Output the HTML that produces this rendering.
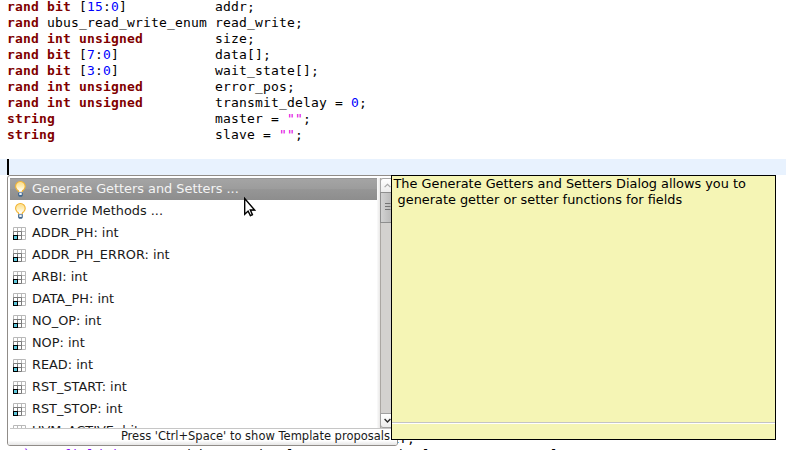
<!DOCTYPE html>
<html><head><meta charset="utf-8">
<style>
html,body{margin:0;padding:0;}
body{width:786px;height:450px;overflow:hidden;background:#fff;position:relative;}
#code2{top:447px !important;}
#code,#code2{position:absolute;left:7px;top:-1px;margin:0;font-family:"DejaVu Sans Mono","Liberation Mono",monospace;font-size:13px;letter-spacing:0.1738px;line-height:16px;color:#000;white-space:pre;}
#code b,#code2 b{color:#7f0000;font-weight:bold;}
#code i,#code2 i{color:#0000ff;font-style:normal;}
#code u{color:#e000e0;text-decoration:none;}
#code s,#code2 s{color:#8a10f8;text-decoration:none;}
#hl{position:absolute;left:0;top:159px;width:786px;height:16px;background:#e8f2fe;}
#caret{position:absolute;left:7px;top:159px;width:2px;height:16px;background:#000;}
#pop{position:absolute;left:7px;top:175px;width:391px;height:271px;border:1px solid #908c88;border-radius:3px;background:#fff;box-sizing:border-box;overflow:hidden;font-family:"DejaVu Sans","Liberation Sans",sans-serif;font-size:12.87px;color:#1a1a1a;}
#list{position:absolute;left:0;top:0;width:389px;height:252px;overflow:hidden;}
.row{position:absolute;left:2px;width:367px;height:22px;line-height:22px;white-space:nowrap;}
.row span{position:absolute;left:22px;top:0px;}
.sel{background:linear-gradient(#969696 0,#969696 1px,#a4a4a4 1px,#9c9c9c 50%,#969696 50%,#8d8d8d 100%);color:#f4f4f4;}
.ic{position:absolute;left:0;top:0;}
#status{position:absolute;left:0;top:252px;width:389px;height:16px;border-top:1px solid #fff;background:linear-gradient(#fff 72%,#e6e6e6);font-size:11.5px;line-height:16px;white-space:nowrap;}
#status span{position:absolute;right:7px;top:-1.5px;}
#sb{position:absolute;left:372px;top:2px;width:15px;height:250px;background:#d3d1cf;border-left:1px solid #aaa6a2;box-sizing:border-box;}
#sbs{position:absolute;left:369px;top:2px;width:3px;height:250px;background:linear-gradient(90deg,#fbfbfb,#e9e8e7);}
#sbu{position:absolute;left:-1px;top:0;width:15px;height:15px;box-sizing:border-box;border:1px solid #a6a6a6;border-radius:3px 0 0 0;background:linear-gradient(#ffffff,#ececec);}
#sbt{position:absolute;left:-1px;top:14px;width:15px;height:31px;box-sizing:border-box;border:1px solid #8e8e8e;background:linear-gradient(90deg,#d2d2d2,#b4b4b4);}
#sbd{position:absolute;left:-1px;top:235px;width:15px;height:15px;box-sizing:border-box;border:1px solid #a0a0a0;border-radius:0 0 0 3px;background:linear-gradient(#ffffff,#ececec);}
#tip{position:absolute;left:391px;top:175px;width:385px;height:265px;box-sizing:border-box;border:1px solid #000;background:#f5f5b5;font-family:"DejaVu Sans","Liberation Sans",sans-serif;font-size:12.87px;line-height:16px;color:#000;white-space:pre;}
#tip .t{position:absolute;left:1.5px;top:-0.5px;}
#tip .sep{position:absolute;left:0;right:0;top:246px;height:1px;background:#c4c4c4;border-bottom:1px solid #fff;}
#mouse{position:absolute;left:240px;top:194px;filter:drop-shadow(0.6px 0.8px 0.6px rgba(0,0,0,0.45));}
</style></head><body>
<svg width="0" height="0" style="position:absolute"><linearGradient id="bg1" x1="0" y1="0" x2="0" y2="1"><stop offset="0" stop-color="#fddc86"/><stop offset="0.45" stop-color="#feedb4"/><stop offset="0.85" stop-color="#ffffff"/></linearGradient></svg>
<div id="hl"></div>
<pre id="code"><b>rand bit</b> [<i>15</i>:<i>0</i>]           addr;
<b>rand</b> ubus_read_write_enum read_write;
<b>rand int unsigned</b>         size;
<b>rand bit</b> [<i>7</i>:<i>0</i>]            data[];
<b>rand bit</b> [<i>3</i>:<i>0</i>]            wait_state[];
<b>rand int unsigned</b>         error_pos;
<b>rand int unsigned</b>         transmit_delay = <i>0</i>;
<b>string</b>                    master = <u>""</u>;
<b>string</b>                    slave = <u>""</u>;


















  <s>`uvm_field_int</s>                           DEFAULT;
</pre>
<pre id="code2">  <s>`uvm_field_int</s>   send have and owl concurrency haul resource normal
</pre>
<div id="caret"></div>
<div id="pop">
<div id="list">
<div class="row sel" style="top:2px"><svg class="ic" width="22" height="22" viewBox="0 0 22 22"><path d="M8.5 14.3V13.2C8.5 12.5 7.7 12.2 7 11.7A4.8 4.8 0 1 1 13.8 11.7C13.1 12.2 12.3 12.5 12.3 13.2V14.3Z" fill="url(#bg1)" stroke="#f1b432" stroke-width="1.15"/><path d="M8.1 14.3h4.7v2.6c0 1-0.9 1.9-1.6 1.9h-1.5c-0.7 0-1.6-0.9-1.6-1.9z" fill="#42688f"/><rect x="9.3" y="14.8" width="2.4" height="2.2" fill="#eef2f6"/><rect x="8.1" y="14" width="4.7" height="0.8" fill="#7d9cbd"/></svg><span>Generate Getters and Setters ...</span></div>
<div class="row" style="top:24px"><svg class="ic" width="22" height="22" viewBox="0 0 22 22"><path d="M8.5 14.3V13.2C8.5 12.5 7.7 12.2 7 11.7A4.8 4.8 0 1 1 13.8 11.7C13.1 12.2 12.3 12.5 12.3 13.2V14.3Z" fill="url(#bg1)" stroke="#f1b432" stroke-width="1.15"/><path d="M8.1 14.3h4.7v2.6c0 1-0.9 1.9-1.6 1.9h-1.5c-0.7 0-1.6-0.9-1.6-1.9z" fill="#42688f"/><rect x="9.3" y="14.8" width="2.4" height="2.2" fill="#eef2f6"/><rect x="8.1" y="14" width="4.7" height="0.8" fill="#7d9cbd"/></svg><span>Override Methods ...</span></div>
<div class="row" style="top:46px"><svg class="ic" width="22" height="22" viewBox="0 0 22 22"><g fill="none" stroke-width="1"><path d="M3.5 5.5h12v12h-12zM7.5 5.5v12M11.5 5.5v12M3.5 9.5h12M3.5 13.5h12" stroke="#b9b9b9"/><path d="M3.5 9.5h8v8h-8zM7.5 9.5v8M3.5 13.5h8" stroke="#7c7c7c"/><rect x="3.5" y="13.5" width="4" height="4" fill="#5cc6da" stroke="#000"/></g></svg><span>ADDR_PH: int</span></div>
<div class="row" style="top:68px"><svg class="ic" width="22" height="22" viewBox="0 0 22 22"><g fill="none" stroke-width="1"><path d="M3.5 5.5h12v12h-12zM7.5 5.5v12M11.5 5.5v12M3.5 9.5h12M3.5 13.5h12" stroke="#b9b9b9"/><path d="M3.5 9.5h8v8h-8zM7.5 9.5v8M3.5 13.5h8" stroke="#7c7c7c"/><rect x="3.5" y="13.5" width="4" height="4" fill="#5cc6da" stroke="#000"/></g></svg><span>ADDR_PH_ERROR: int</span></div>
<div class="row" style="top:90px"><svg class="ic" width="22" height="22" viewBox="0 0 22 22"><g fill="none" stroke-width="1"><path d="M3.5 5.5h12v12h-12zM7.5 5.5v12M11.5 5.5v12M3.5 9.5h12M3.5 13.5h12" stroke="#b9b9b9"/><path d="M3.5 9.5h8v8h-8zM7.5 9.5v8M3.5 13.5h8" stroke="#7c7c7c"/><rect x="3.5" y="13.5" width="4" height="4" fill="#5cc6da" stroke="#000"/></g></svg><span>ARBI: int</span></div>
<div class="row" style="top:112px"><svg class="ic" width="22" height="22" viewBox="0 0 22 22"><g fill="none" stroke-width="1"><path d="M3.5 5.5h12v12h-12zM7.5 5.5v12M11.5 5.5v12M3.5 9.5h12M3.5 13.5h12" stroke="#b9b9b9"/><path d="M3.5 9.5h8v8h-8zM7.5 9.5v8M3.5 13.5h8" stroke="#7c7c7c"/><rect x="3.5" y="13.5" width="4" height="4" fill="#5cc6da" stroke="#000"/></g></svg><span>DATA_PH: int</span></div>
<div class="row" style="top:134px"><svg class="ic" width="22" height="22" viewBox="0 0 22 22"><g fill="none" stroke-width="1"><path d="M3.5 5.5h12v12h-12zM7.5 5.5v12M11.5 5.5v12M3.5 9.5h12M3.5 13.5h12" stroke="#b9b9b9"/><path d="M3.5 9.5h8v8h-8zM7.5 9.5v8M3.5 13.5h8" stroke="#7c7c7c"/><rect x="3.5" y="13.5" width="4" height="4" fill="#5cc6da" stroke="#000"/></g></svg><span>NO_OP: int</span></div>
<div class="row" style="top:156px"><svg class="ic" width="22" height="22" viewBox="0 0 22 22"><g fill="none" stroke-width="1"><path d="M3.5 5.5h12v12h-12zM7.5 5.5v12M11.5 5.5v12M3.5 9.5h12M3.5 13.5h12" stroke="#b9b9b9"/><path d="M3.5 9.5h8v8h-8zM7.5 9.5v8M3.5 13.5h8" stroke="#7c7c7c"/><rect x="3.5" y="13.5" width="4" height="4" fill="#5cc6da" stroke="#000"/></g></svg><span>NOP: int</span></div>
<div class="row" style="top:178px"><svg class="ic" width="22" height="22" viewBox="0 0 22 22"><g fill="none" stroke-width="1"><path d="M3.5 5.5h12v12h-12zM7.5 5.5v12M11.5 5.5v12M3.5 9.5h12M3.5 13.5h12" stroke="#b9b9b9"/><path d="M3.5 9.5h8v8h-8zM7.5 9.5v8M3.5 13.5h8" stroke="#7c7c7c"/><rect x="3.5" y="13.5" width="4" height="4" fill="#5cc6da" stroke="#000"/></g></svg><span>READ: int</span></div>
<div class="row" style="top:200px"><svg class="ic" width="22" height="22" viewBox="0 0 22 22"><g fill="none" stroke-width="1"><path d="M3.5 5.5h12v12h-12zM7.5 5.5v12M11.5 5.5v12M3.5 9.5h12M3.5 13.5h12" stroke="#b9b9b9"/><path d="M3.5 9.5h8v8h-8zM7.5 9.5v8M3.5 13.5h8" stroke="#7c7c7c"/><rect x="3.5" y="13.5" width="4" height="4" fill="#5cc6da" stroke="#000"/></g></svg><span>RST_START: int</span></div>
<div class="row" style="top:222px"><svg class="ic" width="22" height="22" viewBox="0 0 22 22"><g fill="none" stroke-width="1"><path d="M3.5 5.5h12v12h-12zM7.5 5.5v12M11.5 5.5v12M3.5 9.5h12M3.5 13.5h12" stroke="#b9b9b9"/><path d="M3.5 9.5h8v8h-8zM7.5 9.5v8M3.5 13.5h8" stroke="#7c7c7c"/><rect x="3.5" y="13.5" width="4" height="4" fill="#5cc6da" stroke="#000"/></g></svg><span>RST_STOP: int</span></div>
<div class="row" style="top:244px"><svg class="ic" width="22" height="22" viewBox="0 0 22 22"><g fill="none" stroke-width="1"><path d="M3.5 5.5h12v12h-12zM7.5 5.5v12M11.5 5.5v12M3.5 9.5h12M3.5 13.5h12" stroke="#b9b9b9"/><path d="M3.5 9.5h8v8h-8zM7.5 9.5v8M3.5 13.5h8" stroke="#7c7c7c"/><rect x="3.5" y="13.5" width="4" height="4" fill="#5cc6da" stroke="#000"/></g></svg><span>UVM_ACTIVE: bit</span></div>
<div id="sbs"></div><div id="sb"><div id="sbu"><svg width="13" height="13" viewBox="0 0 13 13" style="position:absolute;left:0;top:0"><path d="M3.6 8.2L6.5 5.3L9.4 8.2" fill="none" stroke="#a8a8a8" stroke-width="1.2"/></svg></div><div id="sbt"><svg width="13" height="29" viewBox="0 0 13 29" style="position:absolute;left:0;top:0"><path d="M4 10.5h5.5M4 13.5h5.5M4 16.5h5.5" stroke="#747474" stroke-width="1"/></svg></div><div id="sbd"><svg width="13" height="13" viewBox="0 0 13 13" style="position:absolute;left:0;top:0"><path d="M3.6 5.0L6.5 7.9L9.4 5.0" fill="none" stroke="#2a2a2a" stroke-width="1.4"/></svg></div></div>
</div>
<div id="status"><div style="position:absolute;left:2px;right:2px;top:-1px;height:1px;background:#c6c6c6"></div><span>Press 'Ctrl+Space' to show Template proposals</span></div>
</div>
<div id="tip"><div class="t">The Generate Getters and Setters Dialog allows you to
 generate getter or setter functions for fields</div><div class="sep"></div></div>
<svg id="mouse" width="20" height="26" viewBox="0 0 20 26"><path d="M4.7 4.6 L4.7 20.2 L8.1 17.0 L10.4 21.6 L12.4 20.7 L10.3 16.0 L14.6 16.0 Z" fill="#fff" stroke="#000" stroke-width="1.35" stroke-linejoin="miter"/></svg>
</body></html>
